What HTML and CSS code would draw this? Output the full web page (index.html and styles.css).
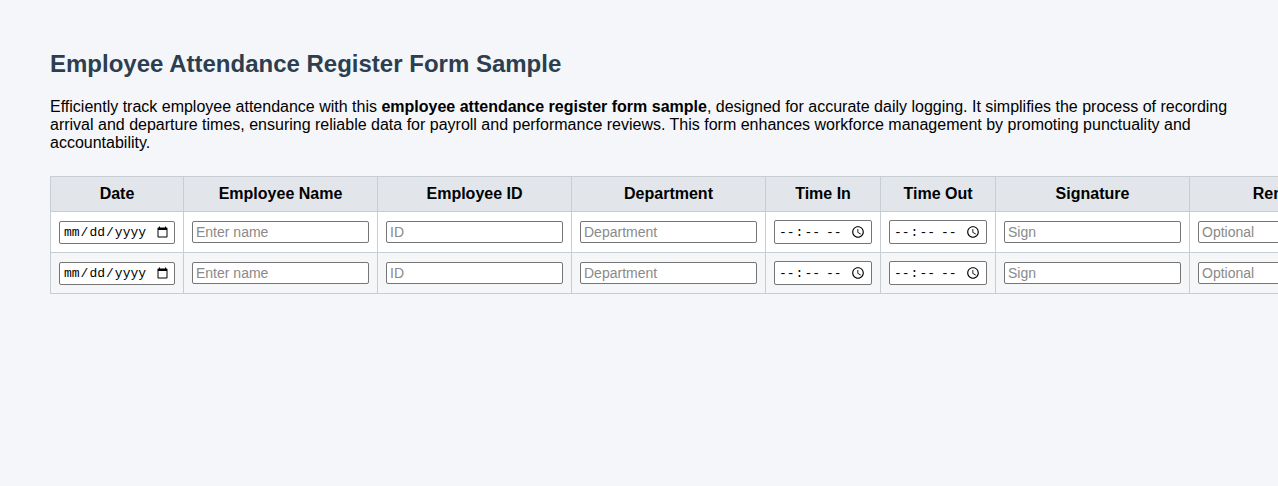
FILE: index.html
```html
<!DOCTYPE html>
<html lang="en">
<head>
<meta charset="utf-8">
<title>Employee Attendance Register Form Sample</title>
<link rel="stylesheet" href="styles.css">
</head>
<body>
<div class="page">
  <h2 class="title">Employee Attendance Register Form Sample</h2>
  <p class="intro">Efficiently track employee attendance with this <strong>employee attendance register form sample</strong>, designed for accurate daily logging. It simplifies the process of recording arrival and departure times, ensuring reliable data for payroll and performance reviews. This form enhances workforce management by promoting punctuality and accountability.</p>
  <table class="register">
    <colgroup>
      <col class="c-date">
      <col class="c-wide">
      <col class="c-wide">
      <col class="c-wide">
      <col class="c-time">
      <col class="c-time">
      <col class="c-wide">
      <col class="c-wide">
    </colgroup>
    <thead>
      <tr>
        <th>Date</th>
        <th>Employee Name</th>
        <th>Employee ID</th>
        <th>Department</th>
        <th>Time In</th>
        <th>Time Out</th>
        <th>Signature</th>
        <th>Remarks</th>
      </tr>
    </thead>
    <tbody>
      <tr>
        <td><input type="date"></td>
        <td><input type="text" placeholder="Enter name"></td>
        <td><input type="text" placeholder="ID"></td>
        <td><input type="text" placeholder="Department"></td>
        <td><input type="time"></td>
        <td><input type="time"></td>
        <td><input type="text" placeholder="Sign"></td>
        <td><input type="text" placeholder="Optional"></td>
      </tr>
      <tr>
        <td><input type="date"></td>
        <td><input type="text" placeholder="Enter name"></td>
        <td><input type="text" placeholder="ID"></td>
        <td><input type="text" placeholder="Department"></td>
        <td><input type="time"></td>
        <td><input type="time"></td>
        <td><input type="text" placeholder="Sign"></td>
        <td><input type="text" placeholder="Optional"></td>
      </tr>
    </tbody>
  </table>
</div>
</body>
</html>
```
FILE: styles.css
```css
html, body {
  margin: 0;
  background: #f4f6f9;
}
body {
  font-family: "Liberation Sans", Arial, sans-serif;
  color: #000;
  overflow: hidden;
}
.page {
  padding: 50px 50px 40px;
}
.title {
  margin: 0 0 20px;
  font-size: 24px;
  font-weight: bold;
  color: #2c3e50;
}
.intro {
  margin: 0 0 24px;
  font-size: 16px;
  line-height: 18px;
}
.register {
  border-collapse: collapse;
  table-layout: fixed;
  width: 1334px;
}
.c-date { width: 133px; }
.c-wide { width: 194px; }
.c-time { width: 115px; }
.register th,
.register td {
  border: 1px solid #c8cdd3;
  padding: 8px;
  text-align: center;
  vertical-align: middle;
}
.register th {
  background: #e2e6ea;
  font-size: 16px;
  font-weight: bold;
  line-height: 18px;
}
.register tbody tr:nth-child(odd) td {
  background: #ffffff;
}
.register tbody tr:nth-child(even) td {
  background: #f5f6f8;
}
.register input {
  width: 100%;
  box-sizing: border-box;
  margin: 0;
  display: block;
  font-family: "Liberation Sans", Arial, sans-serif;
  font-size: 14px;
  border: 1px solid #767676;
  border-radius: 2px;
  padding: 2px 3px;
  height: 22px;
  background: #fff;
}
.register input::placeholder {
  color: #8a8a8a;
}
.register input[type="date"],
.register input[type="time"] {
  font-family: "Liberation Mono", "DejaVu Sans Mono", monospace;
  font-size: 13px;
  height: 23px;
}
.register input[type="time"] {
  height: 24px;
}
```
